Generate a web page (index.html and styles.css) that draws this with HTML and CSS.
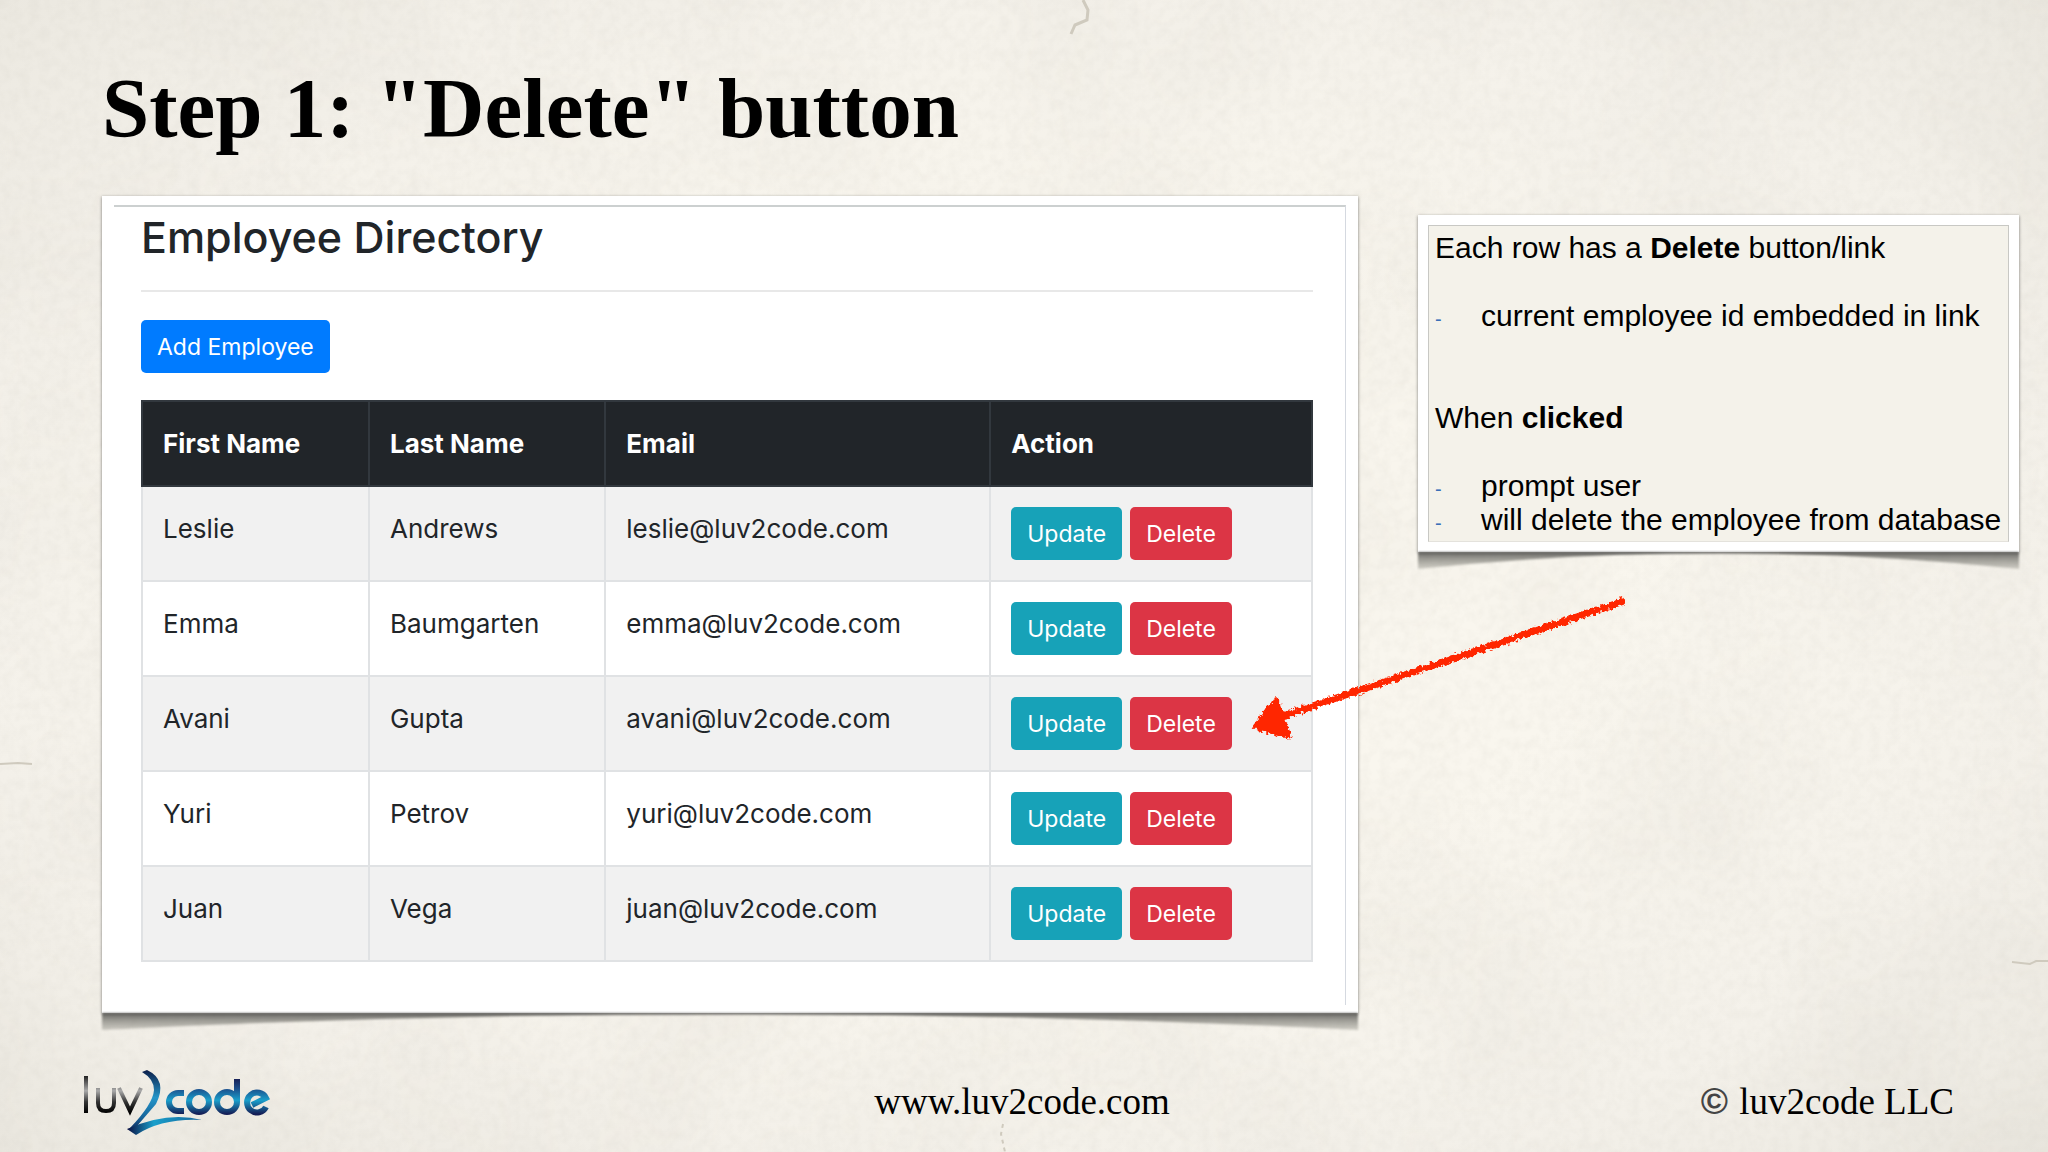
FILE: index.html
```html
<!DOCTYPE html>
<html lang="en">
<head>
<meta charset="utf-8">
<title>Step 1: "Delete" button</title>
<link rel="stylesheet" href="styles.css">
</head>
<body>
<div class="slide">
  <svg class="paper" viewBox="0 0 2048 1152" preserveAspectRatio="none" aria-hidden="true">
    <defs>
      <filter id="grain" x="0" y="0" width="100%" height="100%">
        <feTurbulence type="fractalNoise" baseFrequency="0.1" numOctaves="4" seed="4"/>
        <feColorMatrix values="0 0 0 0 0.5  0 0 0 0 0.48  0 0 0 0 0.42  0.18 0 0 0 -0.06"/>
      </filter>
      <filter id="mottle" x="0" y="0" width="100%" height="100%">
        <feTurbulence type="fractalNoise" baseFrequency="0.005" numOctaves="3" seed="9"/>
        <feColorMatrix values="0 0 0 0 0.55  0 0 0 0 0.52  0 0 0 0 0.46  0.2 0 0 0 -0.07"/>
      </filter>
    </defs>
    <rect width="100%" height="100%" filter="url(#mottle)"/>
    <rect width="100%" height="100%" filter="url(#grain)"/>
    <g fill="none" stroke="#cfcabe" stroke-width="2">
      <path d="M1083 0 1088 10 1087 20 1075 25 1071 34" stroke-width="3"/>
      <path d="M0 764 18 763 32 764"/>
      <path d="M2012 962 2030 964 2036 961 2048 961"/>
      <path d="M1003 1124 1001 1134 1005 1152" stroke-dasharray="4 4"/>
    </g>
  </svg>

  <header class="title"><h1>Step 1: "Delete" button</h1></header>

  <main class="content">
    <section class="photo directory">
      <div class="directory-body">
        <h2>Employee Directory</h2>
        <hr>
        <button class="btn btn-primary" type="button">Add Employee</button>
        <table>
          <colgroup><col class="col-first"><col class="col-last"><col class="col-email"><col class="col-action"></colgroup>
          <thead>
            <tr><th scope="col">First Name</th><th scope="col">Last Name</th><th scope="col">Email</th><th scope="col">Action</th></tr>
          </thead>
          <tbody>
            <tr><td>Leslie</td><td>Andrews</td><td>leslie@luv2code.com</td><td><div class="actions"><button class="btn btn-info" type="button">Update</button><button class="btn btn-danger" type="button">Delete</button></div></td></tr>
            <tr><td>Emma</td><td>Baumgarten</td><td>emma@luv2code.com</td><td><div class="actions"><button class="btn btn-info" type="button">Update</button><button class="btn btn-danger" type="button">Delete</button></div></td></tr>
            <tr><td>Avani</td><td>Gupta</td><td>avani@luv2code.com</td><td><div class="actions"><button class="btn btn-info" type="button">Update</button><button class="btn btn-danger" type="button">Delete</button></div></td></tr>
            <tr><td>Yuri</td><td>Petrov</td><td>yuri@luv2code.com</td><td><div class="actions"><button class="btn btn-info" type="button">Update</button><button class="btn btn-danger" type="button">Delete</button></div></td></tr>
            <tr><td>Juan</td><td>Vega</td><td>juan@luv2code.com</td><td><div class="actions"><button class="btn btn-info" type="button">Update</button><button class="btn btn-danger" type="button">Delete</button></div></td></tr>
          </tbody>
        </table>
      </div>
      <svg class="curl" viewBox="0 0 100 16" preserveAspectRatio="none" aria-hidden="true"><use href="#curl-shape"/></svg>
    </section>

    <aside class="photo note">
      <div class="note-body">
        <p>Each row has a <strong>Delete</strong> button/link</p>
        <ul><li>current employee id embedded in link</li></ul>
        <p class="second">When <strong>clicked</strong></p>
        <ul><li>prompt user</li><li>will delete the employee from database</li></ul>
      </div>
      <svg class="curl" viewBox="0 0 100 16" preserveAspectRatio="none" aria-hidden="true"><use href="#curl-shape"/></svg>
    </aside>

    <svg class="arrow" viewBox="0 0 400 180" aria-hidden="true">
      <defs>
        <filter id="chalk" x="-5%" y="-5%" width="110%" height="115%">
          <feTurbulence type="fractalNoise" baseFrequency="0.28" numOctaves="2" seed="3" result="n"/>
          <feDisplacementMap in="SourceGraphic" in2="n" scale="7" xChannelSelector="R" yChannelSelector="G"/>
        </filter>
        <linearGradient id="curl-fill" x1="0" x2="0" y1="0" y2="1">
          <stop offset="0" stop-color="#3c3c3a" stop-opacity=".75"/>
          <stop offset=".5" stop-color="#55554f" stop-opacity=".5"/>
          <stop offset="1" stop-color="#77776f" stop-opacity=".3"/>
        </linearGradient>
        <path id="curl-shape" d="M0 0H100V16Q75 1 50 1T0 16Z" fill="url(#curl-fill)"/>
      </defs>
      <g filter="url(#chalk)" fill="#ff2600" stroke="#ff2600" stroke-linejoin="round">
        <path d="M384 31 40 147" stroke-width="7" fill="none"/>
        <path d="M15 157 36 130 49 166Z" stroke-width="5"/>
      </g>
    </svg>
  </main>

  <footer class="footer">
    <svg class="logo" viewBox="0 0 194 68" role="img" aria-label="luv2code">
      <defs>
        <linearGradient id="sea" gradientUnits="userSpaceOnUse" x1="0" y1="10" x2="0" y2="46"><stop offset="0" stop-color="#171c52"/><stop offset=".3" stop-color="#1c4f8c"/><stop offset=".62" stop-color="#1a9fcb"/><stop offset="1" stop-color="#151d56"/></linearGradient>
        <linearGradient id="wave" gradientUnits="userSpaceOnUse" x1="0" y1="0" x2="0" y2="66"><stop offset="0" stop-color="#0a1540"/><stop offset=".45" stop-color="#2496c9"/><stop offset=".75" stop-color="#17649a"/><stop offset="1" stop-color="#0c1446"/></linearGradient>
        <linearGradient id="tail" gradientUnits="userSpaceOnUse" x1="50" y1="0" x2="124" y2="0"><stop offset="0" stop-color="#0c1446"/><stop offset=".35" stop-color="#1a9fcb"/><stop offset="1" stop-color="#17649a"/></linearGradient>
        <linearGradient id="metal" gradientUnits="userSpaceOnUse" x1="0" y1="8" x2="0" y2="45"><stop offset="0" stop-color="#222"/><stop offset=".4" stop-color="#aaa"/><stop offset=".7" stop-color="#333"/><stop offset="1" stop-color="#000"/></linearGradient>
      </defs>
      <g fill="none" stroke="url(#metal)" stroke-width="4">
        <path d="M8 8V45M20 20V35Q20 43 28 43T36 35V20M41 20 52 43 63 20"/>
      </g>
      <path d="M64 4 69 2Q90 12 78 36L59 58 49 62 52 60Q75 36 76 22Q76 11 64 4Z" fill="url(#wave)"/>
      <path d="M49 61Q90 43 124 52Q84 50 58 67Z" fill="url(#tail)"/>
      <g fill="none" stroke="url(#sea)" stroke-width="6">
        <path d="M106 25H100A9 9 0 0 0 100 43H106M159 34V11"/>
        <circle cx="121" cy="34" r="10"/>
        <circle cx="149" cy="34" r="10"/>
        <path d="M188 39A10 10 0 1 1 188 30L174 37"/>
      </g>
    </svg>
    <a href="#site">www.luv2code.com</a>
    <p class="copyright"><span class="mark">©</span> luv2code LLC</p>
  </footer>
</div>
</body>
</html>
```
FILE: styles.css
```css
* { box-sizing: border-box; }

body {
  margin: 0;
  background: #f3f0e8;
  color: #000;
  font-family: "Liberation Sans", Arial, sans-serif;
}

h1, h2, p, ul { margin: 0; }

.slide {
  position: relative;
  min-height: 100vh;
  display: flex;
  flex-direction: column;
  overflow: hidden;
  background: radial-gradient(ellipse at 50% 50%, #f9f6ee 40%, #f4f1ea 75%, #ebe8e0 100%);
}

.paper {
  position: absolute;
  inset: 0;
  width: 100%;
  height: 100%;
}

.title {
  position: relative;
  padding: 60px 102px 0;
}

.title h1 {
  font: bold 85px/96px "Liberation Serif", "Times New Roman", serif;
}

.content {
  position: relative;
  flex: 1;
  display: grid;
  grid-template-columns: minmax(0, 1256fr) minmax(0, 601fr);
  align-items: start;
  gap: 60px;
  padding: 40px 29px 0 102px;
}

.photo {
  position: relative;
  box-shadow: 0 1px 3px rgba(0, 0, 0, .5);
}

.curl {
  position: absolute;
  top: 100%;
  left: 0;
  width: 100%;
  height: 17px;
  filter: blur(1px);
}

.directory {
  padding: 9px 12px 8px;
  background: #fff;
}

.directory-body {
  border-top: 2px solid #ccd0d0;
  border-right: 1px solid #d5d9e0;
  padding: 6px 32px 43px 27px;
  color: #212529;
  font-family: Inter, sans-serif;
}

.directory h2 {
  font-weight: 500;
  font-size: 43px;
  line-height: 48px;
}

.directory hr {
  margin: 29px 0 28px;
  border: 0;
  border-top: 2px solid #e8e8e8;
}

.btn {
  height: 53px;
  padding: 0 16px;
  border: 0;
  border-radius: 5px;
  color: #fff;
  font: 23px/36px Inter, sans-serif;
}

.btn-primary { background: #007bff; }
.btn-info { background: #17a2b8; }
.btn-danger { background: #dc3545; }

.actions {
  display: flex;
  gap: 8px;
}

table {
  width: 100%;
  margin-top: 27px;
  border-collapse: collapse;
  table-layout: fixed;
  font-size: 26px;
  line-height: 43px;
}

.col-first { width: 19.4%; }
.col-last { width: 20.2%; }
.col-email { width: 32.9%; }
.col-action { width: 27.5%; }

th, td {
  padding: 20px;
  border: 2px solid #e0e2e4;
  text-align: left;
  vertical-align: top;
}

th {
  height: 84px;
  background: #212529;
  border-color: #32383e;
  color: #fff;
  font-weight: 700;
}

tbody tr:nth-child(odd) { background: #f1f1f1; }

.note {
  margin-top: 19px;
  padding: 10px;
  background: #fff;
}

.note-body {
  padding: 5px 0 4px 6px;
  border: 1px solid #c8c8c4;
  border-bottom-color: #e4e2dc;
  background: #f4f2ea;
  font-size: 30px;
  line-height: 34px;
}

.note ul {
  margin-top: 34px;
  padding: 0;
  list-style: none;
}

.note li {
  display: flex;
  white-space: nowrap;
}

.note li::before {
  content: "-";
  flex: 0 0 46px;
  color: #3a6fb8;
  font-size: 20px;
  line-height: 40px;
  height: 34px;
}

.note .second { margin-top: 68px; }

.arrow {
  position: absolute;
  top: 414px;
  left: 1240px;
  width: 400px;
}

.footer {
  position: relative;
  display: grid;
  grid-template-columns: 1fr auto 1fr;
  align-items: center;
  padding: 0 94px 16px 78px;
  font: 37px/44px "Liberation Serif", serif;
}

.footer a {
  padding-left: 12px;
  color: inherit;
  text-decoration: none;
}

.logo { width: 194px; }

.copyright { text-align: right; }

.mark {
  margin-right: 2px;
  color: #444;
  font-family: "Liberation Sans", sans-serif;
  font-weight: bold;
}
```
